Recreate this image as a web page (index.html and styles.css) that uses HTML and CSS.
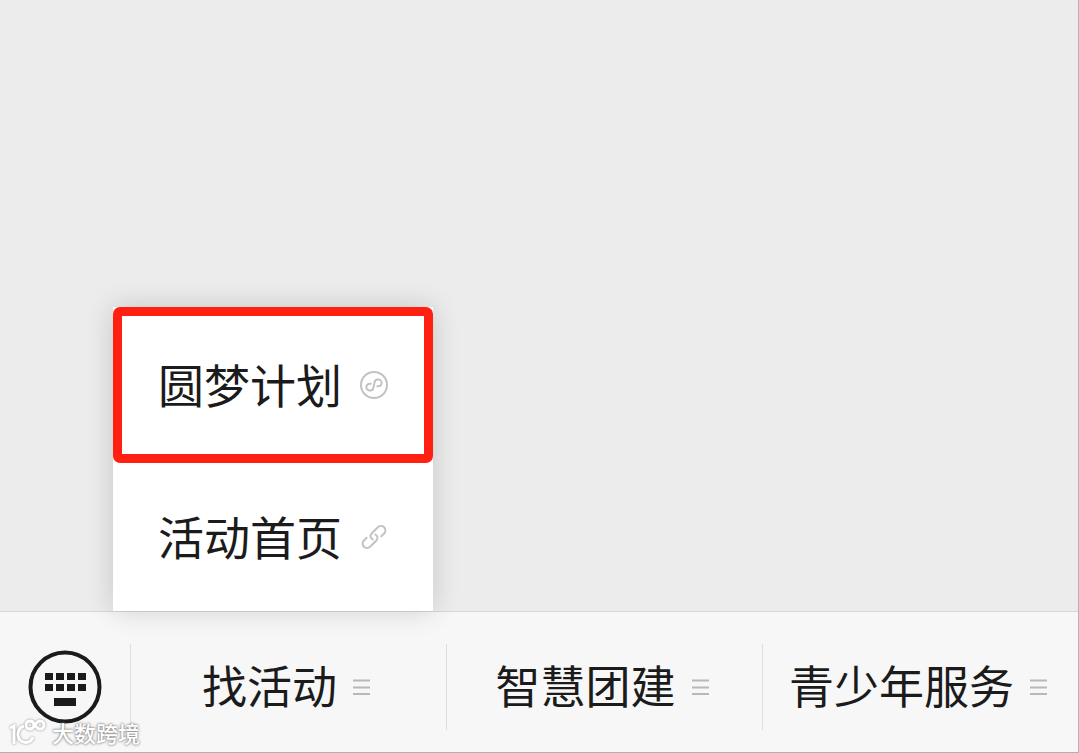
FILE: index.html
```html
<!DOCTYPE html>
<html lang="zh-CN">
<head>
<meta charset="utf-8">
<title>找活动</title>
<link rel="stylesheet" href="styles.css">
</head>
<body>
<main class="chat">
  <div class="submenu">
    <button class="submenu-item selected" type="button">
      <span class="label">圆梦计划</span>
      <svg class="item-icon" viewBox="0 0 28 28" aria-hidden="true">
        <circle cx="14" cy="14" r="13"/>
        <path transform="rotate(12 14 14)" d="M10.5 13.4c-2.200.2-3.600 1.600-3.600 3.500 0 2 1.600 3.400 3.500 3.400 2 0 3.600-1.400 3.600-3.400v-5.800c0-2 1.600-3.400 3.600-3.400 1.900 0 3.500 1.400 3.500 3.400 0 1.900-1.400 3.300-3.600 3.500"/>
      </svg>
    </button>
    <button class="submenu-item" type="button">
      <span class="label">活动首页</span>
      <svg class="item-icon" viewBox="0 0 28 28" aria-hidden="true">
        <path d="M12.6 16.4c-2.400-1.300-2.700-4-1-5.900l6-6c1.900-1.900 4.700-2 6.500-.3 1.800 1.800 1.700 4.600-.2 6.500l-2.600 2.600"/>
        <path d="M15.400 11.600c2.400 1.300 2.700 4 1 5.900l-6 6c-1.900 1.900-4.700 2-6.500.3-1.800-1.800-1.700-4.600.2-6.500l2.600-2.600"/>
      </svg>
    </button>
  </div>
</main>
<nav class="menu-bar">
  <button class="keyboard" type="button" aria-label="键盘">
    <svg class="keyboard-icon" viewBox="0 0 74 74" aria-hidden="true">
      <circle cx="37" cy="37" r="34.500"/>
      <path d="M17 23h8v7h-8zM28 23h8v7h-8zM39 23h8v7h-8zM50 23h8v7h-8zM17 34h8v7h-8zM28 34h8v7h-8zM39 34h8v7h-8zM50 34h8v7h-8zM26 48h22v8H26z"/>
    </svg>
  </button>
  <button class="menu-item" type="button">
    <span class="label">找活动</span>
    <svg class="lines" viewBox="0 0 17 16" aria-hidden="true"><path d="M0 1.500h17M0 8.500h17M0 15h17"/></svg>
  </button>
  <button class="menu-item" type="button">
    <span class="label">智慧团建</span>
    <svg class="lines" viewBox="0 0 17 16" aria-hidden="true"><path d="M0 1.500h17M0 8.500h17M0 15h17"/></svg>
  </button>
  <button class="menu-item" type="button">
    <span class="label">青少年服务</span>
    <svg class="lines" viewBox="0 0 17 16" aria-hidden="true"><path d="M0 1.500h17M0 8.500h17M0 15h17"/></svg>
  </button>
</nav>
<div class="watermark">
  <svg class="watermark-logo" viewBox="0 0 40 28" aria-hidden="true">
    <path d="M2 10l4-2v18M16 8c-6 2-8 9-4 14 4 4 11 3 13-3"/>
    <circle cx="22" cy="7" r="4"/>
    <path d="M22 11c5 0 5-8 10-8a4 4 0 0 1 0 8c-5 0-5-8-10-8"/>
  </svg>
  <span>大数跨境</span>
</div>
</body>
</html>
```
FILE: styles.css
```css
* {
  box-sizing: border-box;
}

body {
  margin: 0;
  min-height: 100vh;
  display: flex;
  flex-direction: column;
  position: relative;
  background: #ececec;
  border-right: 1px solid #b4b4b4;
  color: #1b1b1b;
  font-family: "Noto Sans CJK SC", sans-serif;
}

button {
  margin: 0;
  padding: 0;
  border: 0;
  background: none;
  color: inherit;
  font: inherit;
  cursor: pointer;
}

.chat {
  flex: 1;
  display: flex;
  align-items: flex-end;
  padding-left: 113px;
}

.submenu {
  position: relative;
  z-index: 1;
  width: 320px;
  background: #fff;
  box-shadow: 0 0 26px rgba(0, 0, 0, 0.16);
}

.submenu-item {
  display: flex;
  align-items: center;
  justify-content: center;
  gap: 18px;
  width: 100%;
  height: 148px;
  font-size: 46px;
  line-height: 60px;
}

.submenu-item.selected {
  height: 156px;
  border: 9px solid #ff2012;
  border-radius: 7px;
  background: #fff;
}

.label {
  padding-bottom: 5px;
}

.item-icon {
  width: 28px;
  height: 28px;
  fill: none;
  stroke: #c2c2c2;
  stroke-width: 2;
  stroke-linecap: round;
}

.menu-bar {
  display: flex;
  align-items: stretch;
  height: 142px;
  background: #f7f7f7;
  border-top: 1px solid #d6d6d6;
  border-bottom: 1px solid #b0b0b0;
  padding: 32px 0 22px;
}

.keyboard {
  width: 130px;
  display: grid;
  place-items: center;
}

.keyboard-icon {
  width: 74px;
  height: 74px;
  fill: #1b1b1b;
}

.keyboard-icon circle {
  fill: none;
  stroke: #1b1b1b;
  stroke-width: 4;
}

.menu-item {
  flex: 1 1 0;
  display: flex;
  align-items: center;
  justify-content: center;
  gap: 16px;
  padding-right: 5px;
  border-left: 1px solid #dedede;
  font-size: 45px;
  line-height: 60px;
  white-space: nowrap;
}

.lines {
  width: 17px;
  height: 16px;
  fill: none;
  stroke: #b8b8b8;
  stroke-width: 2;
}

.watermark {
  position: absolute;
  z-index: 2;
  left: 8px;
  bottom: 6px;
  display: flex;
  align-items: center;
  gap: 4px;
  color: #fff;
  font-size: 22px;
  font-weight: 500;
  line-height: 30px;
  text-shadow: 0 0 2px #777, 0 0 3px #999;
}

.watermark-logo {
  width: 40px;
  height: 28px;
  fill: none;
  stroke: #fff;
  stroke-width: 3;
  filter: drop-shadow(0 0 1px #888);
}
```
